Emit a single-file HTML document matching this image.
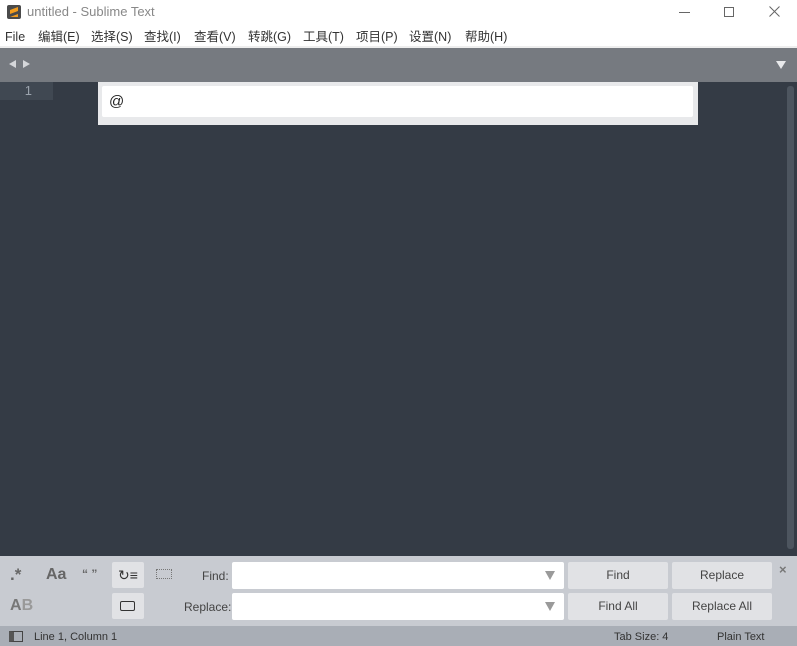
<!DOCTYPE html>
<html><head><meta charset="utf-8"><style>
*{margin:0;padding:0;box-sizing:border-box}
body{width:797px;height:646px;overflow:hidden;font-family:"Liberation Sans","Noto Sans CJK SC",sans-serif;background:#fff;position:relative;font-size:12px}
.a{position:absolute}
.menu span{position:absolute;top:0;white-space:nowrap;line-height:16px;height:16px}
.btn{position:absolute;background:#e1e2e5;border-radius:2px;text-align:center;line-height:27px;color:#444;font-size:12px}
.inp{position:absolute;background:#fff;border-radius:2px}
.tri{position:absolute;width:0;height:0;border-left:5px solid transparent;border-right:5px solid transparent;border-top:9px solid #9a9a9a}
</style></head><body>
<div class="a" style="left:7px;top:5px;width:14px;height:14px;background:#4a4a4a;border-radius:2px"><div class="a" style="left:3px;top:2px;width:8px;height:10px;background:#f39c1c;clip-path:polygon(0 30%,100% 0,100% 40%,0 70%,0 100%,100% 70%,100% 100%,0 100%)"></div></div>
<div class="a" style="left:27px;top:4px;font-size:13px;color:#888">untitled - Sublime Text</div>
<div class="a" style="left:679px;top:12px;width:11px;height:1px;background:#666"></div>
<div class="a" style="left:724px;top:7px;width:10px;height:10px;border:1px solid #666"></div>
<svg class="a" style="left:769px;top:6px" width="11" height="11"><path d="M0.5 0.5L10.5 10.5M10.5 0.5L0.5 10.5" stroke="#666" stroke-width="1"/></svg>
<div class="a menu" style="left:0;top:29px;font-size:12.5px;color:#333;width:797px;height:16px"><span style="left:5px">File</span><span style="left:38px">编辑(E)</span><span style="left:91px">选择(S)</span><span style="left:144px">查找(I)</span><span style="left:194px">查看(V)</span><span style="left:248px">转跳(G)</span><span style="left:303px">工具(T)</span><span style="left:356px">项目(P)</span><span style="left:409px">设置(N)</span><span style="left:465px">帮助(H)</span></div>
<div class="a" style="left:0;top:46px;width:797px;height:2px;background:#eee"></div>
<div class="a" style="left:0;top:48px;width:797px;height:34px;background:#767a80"></div>
<div class="a" style="left:9px;top:60px;border-top:4px solid transparent;border-bottom:4px solid transparent;border-right:7px solid #d5d7da"></div>
<div class="a" style="left:23px;top:60px;border-top:4px solid transparent;border-bottom:4px solid transparent;border-left:7px solid #d5d7da"></div>
<div class="a" style="left:776px;top:61px;border-left:5px solid transparent;border-right:5px solid transparent;border-top:8px solid #e8e9eb"></div>
<div class="a" style="left:0;top:82px;width:797px;height:474px;background:#343b45"></div>
<div class="a" style="left:0;top:82px;width:53px;height:18px;background:#404852;color:#9ba3ad;font-size:13px;text-align:right;padding-right:21px;line-height:18px">1</div>
<div class="a" style="left:787px;top:86px;width:7px;height:463px;background:#4d555f;border-radius:3px"></div>
<div class="a" style="left:98px;top:82px;width:600px;height:43px;background:#e8e9eb"></div>
<div class="a" style="left:102px;top:86px;width:591px;height:31px;background:#fff;border-radius:2px"></div>
<div class="a" style="left:109px;top:93px;font-size:15px;color:#222">@</div>
<div class="a" style="left:0;top:556px;width:797px;height:70px;background:#c8cbd1"></div>
<div class="a" style="left:10px;top:565px;font-size:17px;font-weight:bold;color:#666">.*</div>
<div class="a" style="left:46px;top:566px;font-size:16px;font-weight:bold;color:#666">Aa</div>
<div class="a" style="left:82px;top:567px;font-size:12px;font-weight:bold;color:#666">“ ”</div>
<div class="btn" style="left:112px;top:562px;width:32px;height:26px;font-size:14px;color:#333">↻≡</div>
<div class="a" style="left:156px;top:569px;width:16px;height:10px;border:1px dotted #777"></div>
<div class="a" style="left:10px;top:597px;font-size:16px;font-weight:bold;color:#777">A<span style="color:#999">B</span></div>
<div class="btn" style="left:112px;top:593px;width:32px;height:26px"><div class="a" style="left:8px;top:8px;width:15px;height:10px;border:1.5px solid #333;border-radius:2px"></div></div>
<div class="a" style="left:202px;top:569px;color:#444">Find:</div>
<div class="a" style="left:184px;top:600px;color:#444">Replace:</div>
<div class="inp" style="left:232px;top:562px;width:332px;height:27px"><div class="tri" style="left:313px;top:9px"></div></div>
<div class="inp" style="left:232px;top:593px;width:332px;height:27px"><div class="tri" style="left:313px;top:9px"></div></div>
<div class="btn" style="left:568px;top:562px;width:100px;height:27px">Find</div>
<div class="btn" style="left:672px;top:562px;width:100px;height:27px">Replace</div>
<div class="btn" style="left:568px;top:593px;width:100px;height:27px">Find All</div>
<div class="btn" style="left:672px;top:593px;width:100px;height:27px">Replace All</div>
<div class="a" style="left:779px;top:562px;font-size:13px;font-weight:bold;color:#777">×</div>
<div class="a" style="left:0;top:626px;width:797px;height:20px;background:#a9aeb6"></div>
<div class="a" style="left:9px;top:631px;width:14px;height:11px;border:1px solid #444;border-left:5px solid #555"></div>
<div class="a" style="left:34px;top:631px;font-size:11px;color:#333">Line 1, Column 1</div>
<div class="a" style="left:614px;top:631px;font-size:11px;color:#333">Tab Size: 4</div>
<div class="a" style="left:717px;top:631px;font-size:11px;color:#333">Plain Text</div>
</body></html>
